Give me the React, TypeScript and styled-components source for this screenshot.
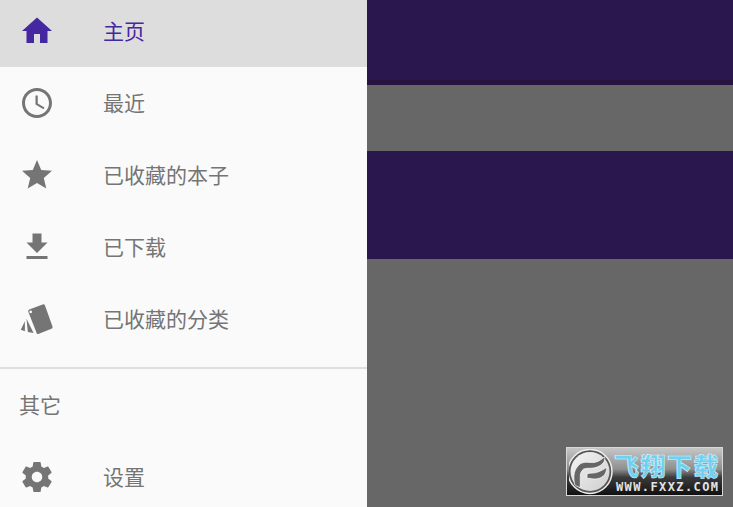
import React from "react";
import styled, { createGlobalStyle } from "styled-components";

const Global = createGlobalStyle`
  html, body { margin: 0; padding: 0; background: #676767; }
  body { font-family: "Noto Sans CJK SC", "Noto Sans", sans-serif; }
`;

const Screen = styled.div`
  position: relative;
  display: flex;
  width: 733px;
  height: 507px;
  overflow: hidden;
`;

const Drawer = styled.nav`
  flex: none;
  width: 367px;
  height: 507px;
  background: #fafafa;
  overflow: hidden;
`;

const List = styled.ul<{ $offset?: number }>`
  list-style: none;
  margin: ${(p) => p.$offset ?? 0}px 0 0;
  padding: 0;
`;

const Row = styled.li<{ $active?: boolean }>`
  display: flex;
  align-items: center;
  height: 72px;
  padding-left: 19px;
  background: ${(p) => (p.$active ? "#dddddd" : "transparent")};
  color: ${(p) => (p.$active ? "#4527a0" : "#757575")};
`;

const IconSlot = styled.svg`
  flex: none;
  width: 36px;
  height: 36px;
  margin-right: 48px;
  fill: currentColor;
`;

const Label = styled.span`
  font-size: 21px;
  line-height: 1;
  padding-bottom: 2px;
`;

const Divider = styled.div`
  height: 2px;
  margin-top: 12px;
  background: #dfdfdf;
`;

const Section = styled.div`
  display: flex;
  align-items: center;
  height: 72px;
  padding: 0 0 2px 19px;
  box-sizing: border-box;
  font-size: 21px;
  color: #757575;
`;

const Backdrop = styled.div`
  flex: 1;
  display: flex;
  flex-direction: column;
  box-shadow: inset 4px 0 4px -3px rgba(0, 0, 0, 0.12);
`;

const Bar = styled.div<{ $h: number }>`
  height: ${(p) => p.$h}px;
  background: #2a174d;
`;

const BarShadow = styled.div`
  height: 5px;
  background: linear-gradient(#27153f, #241340);
`;

const Gap = styled.div<{ $h: number }>`
  height: ${(p) => p.$h}px;
  background: #676767;
`;

const Watermark = styled.div`
  position: absolute;
  left: 566px;
  top: 447px;
  width: 155px;
  height: 47px;
  border: 1px solid #d8d8d8;
  background: linear-gradient(#c6c6c6 0%, #8f8f8f 45%, #3c3c3c 62%, #111 100%);
  overflow: hidden;
`;

const LogoMark = styled.svg`
  position: absolute;
  left: 2px;
  top: 1px;
  width: 46px;
  height: 46px;
`;

const BrandTitle = styled.div`
  position: absolute;
  left: 47px;
  top: 4px;
  height: 26px;
  font-size: 25px;
  line-height: 26px;
  font-weight: 900;
  letter-spacing: 1.5px;
  white-space: nowrap;
  color: #6fd0f0;
  -webkit-text-stroke: 0.6px #d8f4ff;
`;

const BrandUrl = styled.div`
  position: absolute;
  left: 49px;
  top: 33px;
  font-family: "DejaVu Sans Mono", monospace;
  font-size: 12px;
  line-height: 12px;
  font-weight: 700;
  letter-spacing: 1.4px;
  white-space: nowrap;
  color: #e4e4e4;
`;

const icons = {
  home: <path d="M10 20v-6h4v6h5v-8h3L12 3 2 12h3v8z" />,
  clock: (
    <path d="M11.99 2C6.47 2 2 6.48 2 12s4.47 10 9.99 10C17.52 22 22 17.52 22 12S17.52 2 11.99 2zM12 20c-4.42 0-8-3.58-8-8s3.58-8 8-8 8 3.58 8 8-3.58 8-8 8zm.5-13H11v6l5.25 3.15.75-1.23-4.5-2.67z" />
  ),
  star: (
    <path d="M12 17.27 18.18 21l-1.64-7.03L22 9.24l-7.19-.61L12 2 9.19 8.63 2 9.24l5.46 4.73L5.82 21z" />
  ),
  download: <path d="M19 9h-4V3H9v6H5l7 7 7-7zM5 18v2h14v-2H5z" />,
  cards: (
    <g>
      <path
        d="M7.300 6.800 16.200 3.400 21.200 17.400 12.800 20.800z"
        stroke="currentColor"
        strokeWidth="2.400"
        strokeLinejoin="round"
      />
      <circle cx="7.800" cy="7.300" r="0.900" fill="#fafafa" />
      <path d="M5 11.800 9.700 21.300 5.900 20.700z" />
      <path d="M3.900 13.500V20.200L1.200 19.100z" />
    </g>
  ),
  gear: (
    <path d="M19.43 12.98c.04-.32.07-.64.07-.98s-.03-.66-.07-.98l2.11-1.65c.19-.15.24-.42.12-.64l-2-3.46c-.12-.22-.39-.3-.61-.22l-2.49 1c-.52-.4-1.08-.73-1.69-.98l-.38-2.65C14.46 2.18 14.25 2 14 2h-4c-.25 0-.46.18-.49.42l-.38 2.65c-.61.25-1.17.59-1.69.98l-2.49-1c-.23-.09-.49 0-.61.22l-2 3.46c-.13.22-.07.49.12.64l2.11 1.65c-.04.32-.07.65-.07.98s.03.66.07.98l-2.11 1.65c-.19.15-.24.42-.12.64l2 3.46c.12.22.39.3.61.22l2.49-1c.52.4 1.08.73 1.69.98l.38 2.65c.03.24.24.42.49.42h4c.25 0 .46-.18.49-.42l.38-2.65c.61-.25 1.17-.59 1.69-.98l2.49 1c.23.09.49 0 .61-.22l2-3.46c.12-.22.07-.49-.12-.64l-2.11-1.65zM12 15.500c-1.93 0-3.500-1.570-3.500-3.500s1.570-3.500 3.500-3.500 3.500 1.570 3.500 3.500-1.570 3.500-3.500 3.500z" />
  ),
};

const top = [
  { icon: icons.home, label: "主页", active: true },
  { icon: icons.clock, label: "最近" },
  { icon: icons.star, label: "已收藏的本子" },
  { icon: icons.download, label: "已下载" },
  { icon: icons.cards, label: "已收藏的分类" },
];

const Item = ({ icon, label, active }: { icon: React.ReactNode; label: string; active?: boolean }) => (
  <Row $active={active}>
    <IconSlot viewBox="0 0 24 24">{icon}</IconSlot>
    <Label>{label}</Label>
  </Row>
);

export default function App() {
  return (
    <Screen>
      <Global />
      <Drawer>
        <List $offset={-5}>
          {top.map((t) => (
            <Item key={t.label} {...t} />
          ))}
        </List>
        <Divider />
        <Section>其它</Section>
        <List>
          <Item icon={icons.gear} label="设置" />
        </List>
      </Drawer>
      <Backdrop>
        <Bar $h={80} />
        <BarShadow />
        <Gap $h={66} />
        <Bar $h={108} />
        <Gap $h={248} />
      </Backdrop>
      <Watermark>
        <LogoMark viewBox="0 0 46 46">
          <defs>
            <linearGradient id="disc" x1="0" y1="0" x2="1" y2="1">
              <stop offset="0" stopColor="#f4f4f4" />
              <stop offset="1" stopColor="#cfcfcf" />
            </linearGradient>
          </defs>
          <circle cx="21" cy="22.500" r="22" fill="#555" stroke="#ededed" strokeWidth="1.500" />
          <circle cx="21" cy="22.500" r="19.500" fill="url(#disc)" />
          <path
            d="M5.700 35.700C4 28 5 22 8 18.300 10 15 13 13.500 16.300 13.300 20 13 23 14 26 13.300 30 12.500 33 10 35.700 7.700 36 10 35.500 12 34.700 13.300 32 17 28 18.500 24.700 19 21 19.500 17 19 14.700 20 12 22 11 25 11.300 28.300L11.300 38.300C9 38 7 37 5.700 35.700z"
            fill="#666"
            stroke="#fff"
            strokeWidth="0.700"
          />
          <path
            d="M18 25C21 23.500 25 24.500 28 23.300 32 22 35 20 38 18.300 37.500 22 36.500 25 34.700 26.700 32 29 29 30 26.300 30 23 30 20 29 18 29.300z"
            fill="#666"
            stroke="#fff"
            strokeWidth="0.700"
          />
        </LogoMark>
        <BrandTitle>飞翔下载</BrandTitle>
        <BrandUrl>WWW.FXXZ.COM</BrandUrl>
      </Watermark>
    </Screen>
  );
}
